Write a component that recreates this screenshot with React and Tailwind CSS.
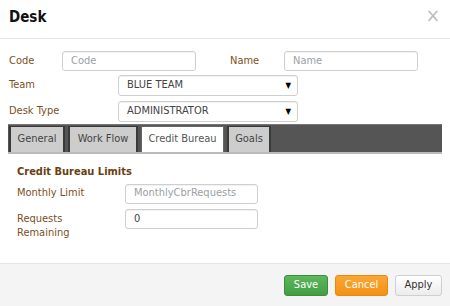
import React from "react";

const font = { fontFamily: '"DejaVu Sans Condensed", "DejaVu Sans", "Liberation Sans", sans-serif' };

function Select({ value }) {
  return (
    <div className="w-[180px] h-[21px] border border-[#cfcfcf] rounded-[3px] bg-white flex items-center justify-between pl-[8px] pr-[6px] shadow-[inset_0_1px_1px_rgba(0,0,0,0.06)]">
      <span className="text-[11px] text-[#444]">{value}</span>
      <span className="text-[8px] text-black leading-none">▼</span>
    </div>
  );
}

function Input({ placeholder, value, w }) {
  return (
    <div className={`${w} h-[20px] border border-[#cfcfcf] rounded-[3px] bg-white flex items-center pl-[8px] shadow-[inset_0_1px_1px_rgba(0,0,0,0.06)]`}>
      {value ? (
        <span className="text-[11px] text-[#444]">{value}</span>
      ) : (
        <span className="text-[11px] text-[#9aa0a6]">{placeholder}</span>
      )}
    </div>
  );
}

export default function App() {
  const tabs = [
    { name: "General", w: "w-[56px]" },
    { name: "Work Flow", w: "w-[70px]" },
    { name: "Credit Bureau", w: "w-[83px]", active: true },
    { name: "Goals", w: "w-[44px]" },
  ];
  return (
    <div style={font} className="w-[450px] h-[306px] bg-white flex flex-col overflow-hidden">
      <div className="h-[39px] border-b border-[#e8e8e8] flex justify-between pl-[9px] pr-[10px] pt-[7px]">
        <span className="text-[15px] font-bold text-[#111] leading-[20px]">Desk</span>
        <span className="text-[19px] text-[#bdbdbd] leading-[14px] pt-[1px]">×</span>
      </div>

      <div className="flex flex-col pt-[12px]">
        <div className="flex items-center pl-[9px] h-[20px]">
          <span className="w-[53px] text-[11px] text-[#7d4f22]">Code</span>
          <Input placeholder="Code" w="w-[134px]" />
          <span className="ml-[34px] w-[54px] text-[11px] text-[#7d4f22]">Name</span>
          <Input placeholder="Name" w="w-[134px]" />
        </div>
        <div className="flex items-center pl-[9px] mt-[4px] h-[21px]">
          <span className="w-[109px] text-[11px] text-[#7d4f22]">Team</span>
          <Select value="BLUE TEAM" />
        </div>
        <div className="flex items-center pl-[9px] mt-[5px] h-[21px]">
          <span className="w-[109px] text-[11px] text-[#7d4f22]">Desk Type</span>
          <Select value="ADMINISTRATOR" />
        </div>

        <div className="ml-[8px] mt-[2px] w-[434px] h-[30px] bg-[#555] border-t border-[#777] border-b-[2px] border-b-[#bbb] flex items-end gap-[3px] pl-[1px]">
          {tabs.map((t) => (
            <div
              key={t.name}
              className={`${t.w} h-[26px] flex items-center justify-center text-[11px] ${
                t.active
                  ? "bg-white text-[#555] border-x border-t border-[#666]"
                  : "bg-[#cdcdcd] text-[#444] border-x-[2px] border-t border-[#3a3a3a]"
              }`}
            >
              {t.name}
            </div>
          ))}
        </div>

        <div className="pl-[17px] pt-[11px]">
          <div className="text-[11px] font-bold text-[#6b3f12] leading-[14px]">Credit Bureau Limits</div>
          <div className="flex items-center mt-[5px] h-[19px]">
            <span className="w-[108px] text-[11px] text-[#7d4f22]">Monthly Limit</span>
            <Input placeholder="MonthlyCbrRequests" w="w-[133px]" />
          </div>
          <div className="flex items-start mt-[6px]">
            <span className="w-[108px] text-[11px] text-[#7d4f22] leading-[14px] pt-[3px]">
              Requests
              <br />
              Remaining
            </span>
            <Input value="0" w="w-[133px]" />
          </div>
        </div>
      </div>

      <div className="mt-auto h-[43px] border-t border-[#e6e6e6] bg-[#f4f4f4] flex items-start justify-end gap-[7px] pr-[8px] pt-[11px]">
        <button className="w-[44px] h-[21px] rounded-[3px] text-[11px] text-white bg-gradient-to-b from-[#5cb85c] to-[#449d44] border border-[#3d8b3d]">
          Save
        </button>
        <button className="w-[53px] h-[21px] rounded-[3px] text-[11px] text-white bg-gradient-to-b from-[#fba631] to-[#f39116] border border-[#e58a12]">
          Cancel
        </button>
        <button className="w-[47px] h-[21px] rounded-[3px] text-[11px] text-[#333] bg-gradient-to-b from-white to-[#ececec] border border-[#cfcfcf]">
          Apply
        </button>
      </div>
    </div>
  );
}
